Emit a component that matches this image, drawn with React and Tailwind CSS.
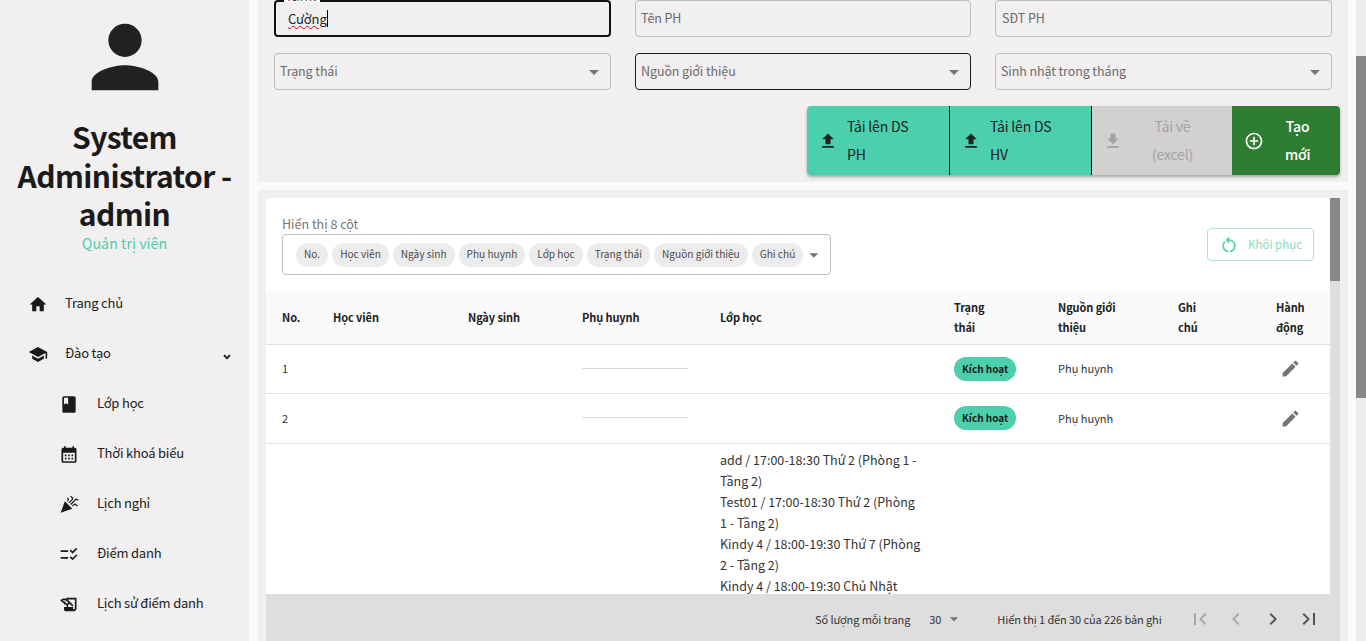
import {
  MdPerson,
  MdHome,
  MdSchool,
  MdBook,
  MdCalendarMonth,
  MdCelebration,
  MdChecklistRtl,
  MdHistoryEdu,
  MdArrowDropDown,
  MdFileUpload,
  MdFileDownload,
  MdAddCircleOutline,
  MdEdit,
  MdOutlineRestartAlt,
  MdFirstPage,
  MdLastPage,
  MdChevronLeft,
  MdChevronRight,
} from "react-icons/md";

const font = { fontFamily: '"Noto Sans CJK JP", "Noto Sans", sans-serif' };

const chips = ["No.", "Học viên", "Ngày sinh", "Phụ huynh", "Lớp học", "Trạng thái", "Nguồn giới thiệu", "Ghi chú"];

const classLines = [
  "add / 17:00-18:30 Thứ 2 (Phòng 1 -",
  "Tầng 2)",
  "Test01 / 17:00-18:30 Thứ 2 (Phòng",
  "1 - Tầng 2)",
  "Kindy 4 / 18:00-19:30 Thứ 7 (Phòng",
  "2 - Tầng 2)",
  "Kindy 4 / 18:00-19:30 Chủ Nhật",
  "(Phòng 2 - Tầng 2)",
];

function NavItem({ icon: Icon, label, sub, size = 21, chevron }) {
  return (
    <div className={`flex h-[50px] items-center text-[13px] tracking-[-0.2px] text-[#212121] ${sub ? "pl-[59px]" : "pl-[28px]"}`}>
      <span className="flex w-[20px] justify-center text-[#1a1a1a]">
        <Icon size={size} />
      </span>
      <span className={`${sub ? "ml-[18px]" : "ml-[17px]"} -mt-[3px]`}>{label}</span>
      {chevron && (
        <svg viewBox="0 0 10 8" className="ml-auto mr-[18px] mt-[5px] h-[6px] w-[8px]" fill="none" stroke="#1a1a1a" strokeWidth="2.4">
          <path d="M1 1.5 5 5.5 9 1.5" />
        </svg>
      )}
    </div>
  );
}

function SelectField({ label, active }) {
  return (
    <div
      className={`flex h-[37px] items-center justify-between rounded border pl-[5px] pr-[4px] text-[12.5px] tracking-[-0.1px] text-[#6b6b6b] ${
        active ? "border-[#1a1a1a]" : "border-[#bdbdbd]"
      }`}
    >
      <span className="-mt-px">{label}</span>
      <MdArrowDropDown size={24} className="text-[#757575]" />
    </div>
  );
}

function ActionButton({ icon: Icon, lines, className, textClass }) {
  return (
    <div className={`flex h-[69px] items-center text-[14px] leading-[28px] tracking-[-0.2px] ${className}`}>
      <Icon size={20} className="shrink-0" />
      <span className={`-mt-px ${textClass}`}>
        {lines[0]}
        <br />
        {lines[1]}
      </span>
    </div>
  );
}

function Row({ no }) {
  return (
    <tr className="h-[49.5px] border-b border-[#e0e0e0] text-[11px] text-[#333]">
      <td className="pb-px pl-4">{no}</td>
      <td />
      <td />
      <td className="pl-4 pr-[16px]">
        <div className="-mt-px border-t border-[#d8d8d8]" />
      </td>
      <td />
      <td className="pl-4">
        <span className="inline-block rounded-full bg-[#4ccfac] px-2 py-[2px] text-[10px] font-bold leading-[20px] text-[#1a1a1a]">
          Kích hoạt
        </span>
      </td>
      <td className="pb-px pl-4">Phụ huynh</td>
      <td />
      <td className="pl-[20px] text-[#757575]">
        <MdEdit size={21} />
      </td>
    </tr>
  );
}

export default function App() {
  return (
    <div className="flex h-[641px] w-[1366px] overflow-hidden bg-[#fafafa]" style={font}>
      <aside className="w-[249px] shrink-0 bg-[#f1eff0]">
        <div className="flex justify-center pt-[7px] text-[#212121]">
          <MdPerson size={100} />
        </div>
        <div className="mt-[10px] text-center text-[30px] font-bold leading-[38.5px] tracking-[-0.6px] text-[#1a1a1a]">
          System
          <br />
          Administrator -
          <br />
          admin
        </div>
        <div className="text-center text-[14.3px] leading-[20px] text-[#4ccfac]">Quản trị viên</div>
        <nav className="mt-[27px]">
          <NavItem icon={MdHome} label="Trang chủ" />
          <NavItem icon={MdSchool} label="Đào tạo" chevron />
          <NavItem icon={MdBook} label="Lớp học" sub />
          <NavItem icon={MdCalendarMonth} label="Thời khoá biểu" sub />
          <NavItem icon={MdCelebration} label="Lịch nghỉ" sub />
          <NavItem icon={MdChecklistRtl} label="Điểm danh" sub />
          <NavItem icon={MdHistoryEdu} label="Lịch sử điểm danh" sub />
        </nav>
      </aside>

      <main className="flex min-w-0 flex-1 flex-col pl-[9px] pr-[8px]">
        <section className="h-[182px] shrink-0 bg-[#f1eff0] px-[16px]">
          <div className="grid grid-cols-[337px_336px_337px] gap-x-[24px] gap-y-[16px]">
            <div className="relative flex h-[37px] items-center rounded border-2 border-[#111] pl-[12px] text-[13px] tracking-[-0.1px] text-[#212121]">
              <span className="absolute -top-[10px] left-[8px] bg-white px-[2px] text-[10px] leading-[10px]">Tên HV</span>
              <span className="underline decoration-red-600 decoration-wavy decoration-1">Cường</span>
              <span className="h-[17px] w-px bg-black" />
            </div>
            <div className="flex h-[37px] items-center rounded border border-[#bdbdbd] pb-px pl-[5px] text-[12.5px] tracking-[-0.1px] text-[#6b6b6b]">
              Tên PH
            </div>
            <div className="flex h-[37px] items-center rounded border border-[#bdbdbd] pb-px pl-[6px] text-[12.5px] tracking-[-0.1px] text-[#6b6b6b]">
              SĐT PH
            </div>
            <SelectField label="Trạng thái" />
            <SelectField label="Nguồn giới thiệu" active />
            <SelectField label="Sinh nhật trong tháng" />
          </div>
          <div className="mt-[16px] flex justify-end">
            <div className="-mr-[8px] flex overflow-hidden rounded shadow-[0_2px_3px_rgba(0,0,0,0.3)]">
              <ActionButton
                icon={MdFileUpload}
                lines={["Tải lên DS", "PH"]}
                className="w-[143px] border-r border-black bg-[#4ccfac] pl-[11px] text-[#212121]"
                textClass="ml-[9px]"
              />
              <ActionButton
                icon={MdFileUpload}
                lines={["Tải lên DS", "HV"]}
                className="w-[142px] border-r border-black bg-[#4ccfac] pl-[11px] text-[#212121]"
                textClass="ml-[9px]"
              />
              <ActionButton
                icon={MdFileDownload}
                lines={["Tải về", "(excel)"]}
                className="w-[140px] bg-[#d2d0d1] pl-[11px] text-[#a3a3a3]"
                textClass="ml-[29px] text-center"
              />
              <ActionButton
                icon={MdAddCircleOutline}
                lines={["Tạo", "mới"]}
                className="w-[108px] bg-[#2e7d32] pl-[12px] text-white"
                textClass="ml-[21px] text-center font-medium"
              />
            </div>
          </div>
        </section>

        <section className="mt-[8px] flex min-h-0 flex-1 flex-col bg-[#f1eff0] pl-[8px] pr-[8px] pt-[8px]">
          <div className="flex min-h-0 flex-1 rounded-t bg-white">
            <div className="flex min-w-0 flex-1 flex-col">
              <div className="flex h-[93px] shrink-0 items-start justify-between pl-[16px] pr-[16px]">
                <div>
                  <div className="mt-[16px] text-[12.5px] leading-[20px] text-[#757575]">Hiển thị 8 cột</div>
                  <div className="flex h-[41px] w-[549px] items-center rounded border border-[#bdbdbd] pl-[13px] pr-[5px]">
                    <div className="flex gap-[4px]">
                      {chips.map((chip) => (
                        <span
                          key={chip}
                          className="whitespace-nowrap rounded-full bg-[#ececec] px-[8px] pb-[2px] text-[10.1px] leading-[22px] text-[#4a4a4a]"
                        >
                          {chip}
                        </span>
                      ))}
                    </div>
                    <MdArrowDropDown size={22} className="ml-auto text-[#757575]" />
                  </div>
                </div>
                <div className="mt-[30px] flex h-[33px] w-[107px] items-center gap-[9px] rounded border border-[#a6e7d5] pl-[11px] text-[11.5px] text-[#7fdcc3]">
                  <MdOutlineRestartAlt size={20} className="shrink-0 text-[#4ccfac]" />
                  <span>Khôi phục</span>
                </div>
              </div>

              <div className="min-h-0 flex-1 overflow-hidden">
                <table className="w-full table-fixed border-collapse text-left">
                  <colgroup>
                    <col className="w-[51px]" />
                    <col className="w-[135px]" />
                    <col className="w-[114px]" />
                    <col className="w-[138px]" />
                    <col className="w-[234px]" />
                    <col className="w-[104px]" />
                    <col className="w-[120px]" />
                    <col className="w-[98px]" />
                    <col className="w-[70px]" />
                  </colgroup>
                  <thead>
                    <tr className="h-[53px] border-b border-[#e0e0e0] bg-[#fafafa] text-[11px] leading-[20px] tracking-[-0.1px] text-[#212121]">
                      <th className="pl-4 font-bold">No.</th>
                      <th className="pl-4 font-bold">Học viên</th>
                      <th className="pl-4 font-bold">Ngày sinh</th>
                      <th className="pl-4 font-bold">Phụ huynh</th>
                      <th className="pl-4 font-bold">Lớp học</th>
                      <th className="pl-4 font-bold">
                        Trạng
                        <br />
                        thái
                      </th>
                      <th className="pl-4 font-bold">
                        Nguồn giới
                        <br />
                        thiệu
                      </th>
                      <th className="pl-4 font-bold">
                        Ghi
                        <br />
                        chú
                      </th>
                      <th className="pl-4 font-bold">
                        Hành
                        <br />
                        động
                      </th>
                    </tr>
                  </thead>
                  <tbody>
                    <Row no={1} />
                    <Row no={2} />
                    <tr className="align-top">
                      <td colSpan={4} />
                      <td className="whitespace-nowrap pl-4 pt-[5px] text-[12.5px] leading-[21px] text-[#333]">
                        {classLines.map((line) => (
                          <div key={line}>{line}</div>
                        ))}
                      </td>
                      <td colSpan={4} />
                    </tr>
                  </tbody>
                </table>
              </div>
            </div>
            <div className="w-[10px] shrink-0 bg-[#dedede]">
              <div className="h-[83px] bg-[#888]" />
            </div>
          </div>
          <div className="flex h-[47px] shrink-0 items-center bg-[#dedede] pl-[549px] pt-[3px] text-[11px] tracking-[-0.1px] text-[#333]">
            <span>Số lượng mỗi trang</span>
            <span className="ml-[19px]">30</span>
            <MdArrowDropDown size={20} className="ml-[3px] text-[#757575]" />
            <span className="ml-[33px]">Hiển thị 1 đến 30 của 226 bản ghi</span>
            <div className="ml-[26px] flex gap-[12.5px]">
              <MdFirstPage size={24} className="text-[#a8a8a8]" />
              <MdChevronLeft size={24} className="text-[#a8a8a8]" />
              <MdChevronRight size={24} className="text-[#555]" />
              <MdLastPage size={24} className="text-[#555]" />
            </div>
          </div>
        </section>
      </main>

      <div className="w-[10px] shrink-0 bg-[#ececec]">
        <div className="h-[56px]" />
        <div className="h-[342px] bg-[#888]" />
      </div>
    </div>
  );
}
